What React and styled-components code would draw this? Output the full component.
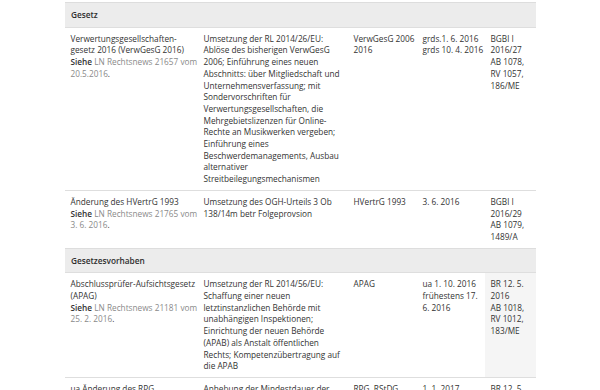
import styled, { createGlobalStyle } from "styled-components";

const GlobalStyle = createGlobalStyle`
  html, body {
    margin: 0;
    padding: 0;
    background: #fff;
  }
  body {
    font-family: "Open Sans", "Noto Sans", "Liberation Sans", sans-serif;
    color: #333;
  }
`;

const Page = styled.div`
  padding: 2px 0 0 65px;
`;

const Table = styled.table`
  width: 471px;
  border-collapse: collapse;
  table-layout: fixed;
  font-size: 8.25px;
  line-height: 11.7px;
`;

const Col = styled.col`
  width: ${(p) => p.$w}px;
`;

const SectionCell = styled.td`
  background: #ececec;
  border-top: 1px solid #dddddd;
  padding: 6px 5px 6px 6px;
  font-weight: 600;
  color: #2e2e2e;
`;

const Row = styled.tr`
  border-top: 1px solid #dedede;
`;

const Cell = styled.td`
  vertical-align: top;
  padding: 5px 0 5px 5.5px;
  background: ${(p) => (p.$hover ? "#f5f5f5" : "transparent")};
  word-wrap: break-word;
`;

const See = styled.span`
  font-weight: 600;
`;

const Link = styled.a`
  color: #8a8a8a;
  text-decoration: none;
`;

const sections = [
  {
    title: "Gesetz",
    rows: [
      {
        name: "Verwertungsgesellschaften-gesetz 2016 (VerwGesG 2016)",
        link: "LN Rechtsnews 21657 vom 20.5.2016",
        desc: "Umsetzung der RL 2014/26/EU: Ablöse des bisherigen VerwGesG 2006; Einführung eines neuen Abschnitts: über Mitgliedschaft und Unternehmensverfassung; mit Sondervorschriften für Verwertungsgesellschaften, die Mehrgebietslizenzen für Online-Rechte an Musikwerken vergeben; Einführung eines Beschwerdemanagements, Ausbau alternativer Streitbeilegungsmechanismen",
        law: ["VerwGesG 2006 2016"],
        date: ["grds.1. 6. 2016", "grds 10. 4. 2016"],
        ref: ["BGBl I 2016/27", "AB 1078,", "RV 1057,", "186/ME"],
      },
      {
        name: "Änderung des HVertrG 1993",
        link: "LN Rechtsnews 21765 vom 3. 6. 2016",
        desc: "Umsetzung des OGH-Urteils 3 Ob 138/14m betr Folgeprovsion",
        law: ["HVertrG 1993"],
        date: ["3. 6. 2016"],
        ref: ["BGBl I 2016/29", "AB 1079,", "1489/A"],
      },
    ],
  },
  {
    title: "Gesetzesvorhaben",
    rows: [
      {
        name: "Abschlussprüfer-Aufsichtsgesetz (APAG)",
        link: "LN Rechtsnews 21181 vom 25. 2. 2016",
        desc: "Umsetzung der RL 2014/56/EU: Schaffung einer neuen letztinstanzlichen Behörde mit unabhängigen Inspektionen; Einrichtung der neuen Behörde (APAB) als Anstalt öffentlichen Rechts; Kompetenzübertragung auf die APAB",
        law: ["APAG"],
        date: ["ua 1. 10. 2016 frühestens 17. 6. 2016"],
        ref: ["BR 12. 5. 2016", "AB 1018,", "RV 1012,", "183/ME"],
        hover: true,
      },
      {
        name: "ua Änderung des RPG",
        desc: "Anhebung der Mindestdauer der Ausbildung",
        law: ["RPG, RStDG,"],
        date: ["1. 1. 2017"],
        ref: ["BR 12. 5.", "2016"],
      },
    ],
  },
];

function Lines({ items }) {
  return items.map((t, i) => (
    <span key={i}>
      {i > 0 && <br />}
      {t}
    </span>
  ));
}

export default function App() {
  return (
    <Page>
      <GlobalStyle />
      <Table>
        <colgroup>
          <Col $w={133} />
          <Col $w={150} />
          <Col $w={69} />
          <Col $w={68} />
          <Col $w={51} />
        </colgroup>
        {sections.map((s) => (
          <tbody key={s.title}>
            <tr>
              <SectionCell colSpan={5}>{s.title}</SectionCell>
            </tr>
            {s.rows.map((r) => (
              <Row key={r.name}>
                <Cell>
                  {r.name}
                  {r.link && (
                    <>
                      <br />
                      <See>Siehe</See> <Link href="#">{r.link}</Link>.
                    </>
                  )}
                </Cell>
                <Cell>{r.desc}</Cell>
                <Cell>
                  <Lines items={r.law} />
                </Cell>
                <Cell>
                  <Lines items={r.date} />
                </Cell>
                <Cell $hover={r.hover}>
                  <Lines items={r.ref} />
                </Cell>
              </Row>
            ))}
          </tbody>
        ))}
      </Table>
    </Page>
  );
}
